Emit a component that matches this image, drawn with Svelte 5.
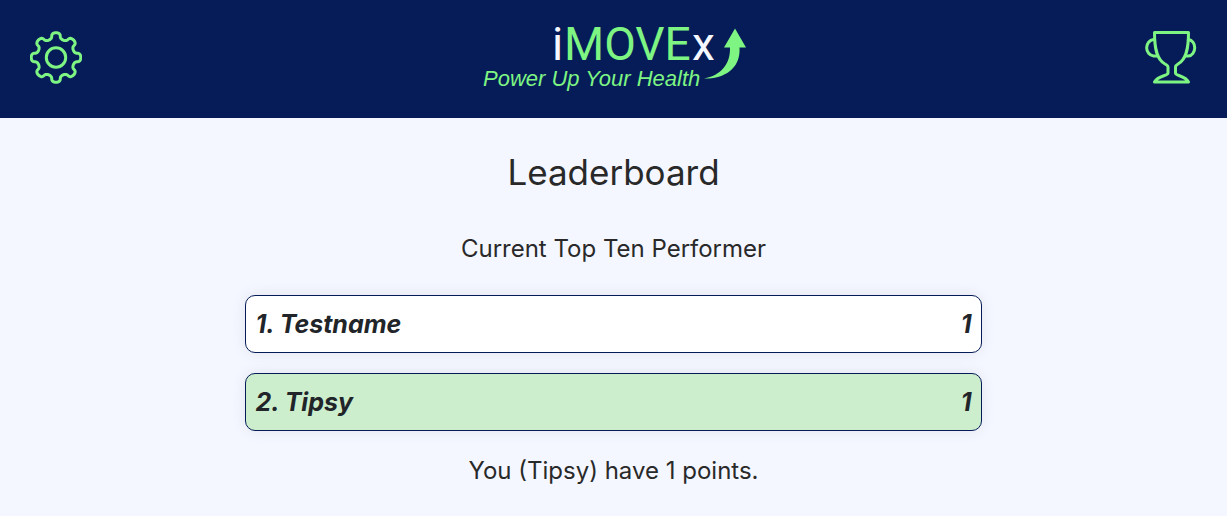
<script>
  const currentUser = 'Tipsy';
  const players = [
    { name: 'Testname', points: 1 },
    { name: 'Tipsy', points: 1 },
  ];
  const me = players.find((p) => p.name === currentUser);

  // Outline of the gear: a circle with eight rounded teeth.
  const gear = Array.from({ length: 192 }, (_, i) => {
    const angle = (i / 192) * Math.PI * 2;
    const wave = angle + 0.045 * Math.sin(16 * angle);
    const radius = 21.8 + 3 * Math.cos(8 * angle);
    return `${(26 + radius * Math.cos(wave)).toFixed(2)},${(27.5 + radius * Math.sin(wave)).toFixed(2)}`;
  }).join(' ');
</script>

<header>
  <button class="icon" type="button" aria-label="Settings">
    <svg viewBox="0 0 52 54" fill="none" stroke="currentColor" stroke-width="3" stroke-linejoin="round">
      <circle cx="26" cy="27.5" r="9.7" />
      <polygon points={gear} />
    </svg>
  </button>
  <a class="logo" href="#home" aria-label="iMOVEx home">
    <svg viewBox="-4 -8 272 88">
      <text y="39" class="word"><tspan x="70" class="light">i</tspan><tspan x="82">MOVE</tspan><tspan x="210" class="light">x</tspan></text>
      <text x="1" y="65" class="tagline">Power Up Your Health</text>
      <path fill="currentColor" d="M253 7.500L264 26.500H257.500C258.500 42 250 52 236 56C231 57.300 227 57.600 222 57.500C239 54.500 248.500 43 248 26.500H242Z" />
    </svg>
  </a>
  <button class="icon" type="button" aria-label="Leaderboard">
    <svg viewBox="0 0 52 54" fill="none" stroke="currentColor" stroke-width="3" stroke-linejoin="round">
      <path d="M9.500 2.500H43.500C43.500 18 41.500 29.500 33 34C31.300 35 30.500 35.500 30.500 37V43C30.500 46 40 45.500 43.500 52H9.500C13 45.500 23 46 23 43V37C23 35.500 22 35 20 34C11.500 29.500 9.500 18 9.500 2.500Z" />
      <path d="M10 9.500H8.500A7.700 8.300 0 0 0 8.500 26H13M43 9.500H43.500A7 8.300 0 0 1 43.500 26H40" />
    </svg>
  </button>
</header>

<main>
  <h1>Leaderboard</h1>
  <p>Current Top Ten Performer</p>
  <ol>
    {#each players as player, i}
      <li class:me={player.name === currentUser}>
        <span>{i + 1}. {player.name}</span>
        <span>{player.points}</span>
      </li>
    {/each}
  </ol>
  <p>You ({currentUser}) have {me.points} points.</p>
</main>

<style>
  :global(body) {
    margin: 0;
    background: #f4f7ff;
    color: #292929;
    font-family: Inter, 'Liberation Sans', sans-serif;
  }
  header {
    display: flex;
    align-items: center;
    justify-content: space-between;
    box-sizing: border-box;
    padding: 13px 30px 17px;
    background: #051c58;
    color: #7ef583;
  }
  .icon {
    display: flex;
    padding: 0;
    border: 0;
    background: none;
    color: inherit;
    cursor: pointer;
  }
  .icon svg {
    width: 52px;
    height: 54px;
  }
  .logo {
    display: flex;
    color: inherit;
  }
  .logo svg {
    width: 272px;
    height: 88px;
  }
  .logo text {
    fill: currentColor;
  }
  .word {
    font: 46px Roboto, sans-serif;
  }
  .word .light {
    fill: #f4f7ff;
  }
  .tagline {
    font: italic 22px 'Liberation Sans', sans-serif;
  }
  main {
    box-sizing: border-box;
    width: 60%;
    min-width: 300px;
    margin: 0 auto;
    padding: 32px 0 24px;
    text-align: center;
  }
  h1 {
    margin: 0;
    font-size: 35px;
    font-weight: 400;
    line-height: 44px;
  }
  p {
    margin: 0;
    font-size: 24px;
    line-height: 36px;
  }
  h1 + p {
    margin-top: 37px;
  }
  ol {
    display: grid;
    gap: 20px;
    margin: 28px 0 22px;
    padding: 0;
    list-style: none;
  }
  li {
    display: flex;
    align-items: center;
    justify-content: space-between;
    padding: 10px 9px;
    border: 1px solid #051c58;
    border-radius: 10px;
    background: #fff;
    box-shadow: 0 0 15px rgba(0, 0, 0, 0.08);
    color: #212529;
    font-size: 25px;
    font-style: italic;
    font-weight: 700;
    line-height: 36px;
  }
  li.me {
    background: #cdeecd;
  }
</style>
